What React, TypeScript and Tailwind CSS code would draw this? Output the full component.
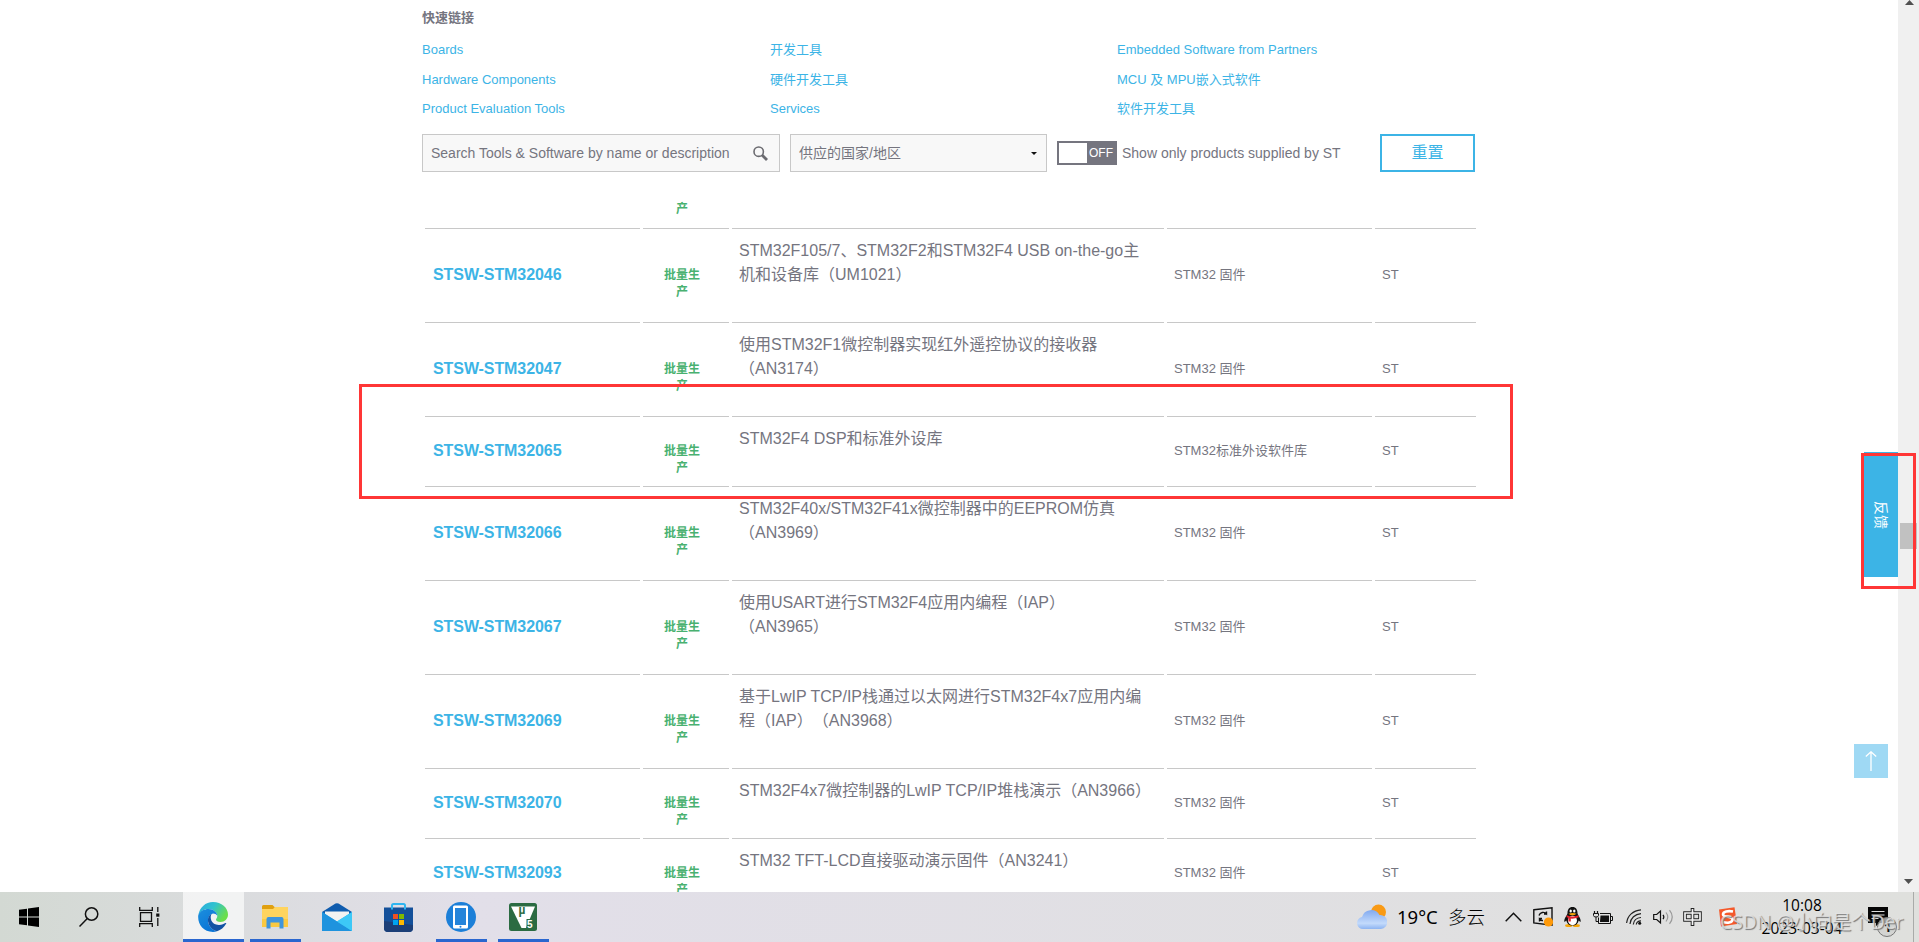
import type { ReactNode } from 'react';

type Product = {
  name: string;
  lines: string[];
  type: string;
};

const quickLinks = [
  ['Boards', '开发工具', 'Embedded Software from Partners'],
  ['Hardware Components', '硬件开发工具', 'MCU 及 MPU嵌入式软件'],
  ['Product Evaluation Tools', 'Services', '软件开发工具'],
];

const products: Product[] = [
  {
    name: 'STSW-STM32046',
    lines: ['STM32F105/7、STM32F2和STM32F4 USB on-the-go主', '机和设备库（UM1021）'],
    type: 'STM32 固件',
  },
  {
    name: 'STSW-STM32047',
    lines: ['使用STM32F1微控制器实现红外遥控协议的接收器', '（AN3174）'],
    type: 'STM32 固件',
  },
  { name: 'STSW-STM32065', lines: ['STM32F4 DSP和标准外设库'], type: 'STM32标准外设软件库' },
  {
    name: 'STSW-STM32066',
    lines: ['STM32F40x/STM32F41x微控制器中的EEPROM仿真', '（AN3969）'],
    type: 'STM32 固件',
  },
  {
    name: 'STSW-STM32067',
    lines: ['使用USART进行STM32F4应用内编程（IAP）', '（AN3965）'],
    type: 'STM32 固件',
  },
  {
    name: 'STSW-STM32069',
    lines: ['基于LwIP TCP/IP栈通过以太网进行STM32F4x7应用内编', '程（IAP）（AN3968）'],
    type: 'STM32 固件',
  },
  {
    name: 'STSW-STM32070',
    lines: ['STM32F4x7微控制器的LwIP TCP/IP堆栈演示（AN3966）'],
    type: 'STM32 固件',
  },
  {
    name: 'STSW-STM32093',
    lines: ['STM32 TFT-LCD直接驱动演示固件（AN3241）'],
    type: 'STM32 固件',
  },
];

const rowGrid = 'grid grid-cols-[215px_86px_432px_205px_101px] gap-x-[3px]';
const cell = 'border-b border-[#c8c8c8]';

function ProductRow({ product }: { product: Product }) {
  return (
    <div className={`${rowGrid} shrink-0 text-[13px]`}>
      <div className={`${cell} flex items-center pb-px pl-2`}>
        <a className="text-base font-bold tracking-[-0.08px] text-[#3cb4e6]">{product.name}</a>
      </div>
      <div className={`${cell} flex items-center pl-[21px]`}>
        {/* the second line hangs below the centre of the row */}
        <div className="h-[17px] w-9 text-center text-xs leading-[17px] font-bold text-[#49b170]">
          批量生产
        </div>
      </div>
      <div className={`${cell} pt-2.5 pb-[35px] pl-[7px] text-base leading-6 whitespace-nowrap`}>
        {product.lines.map((line) => (
          <p key={line}>{line}</p>
        ))}
      </div>
      <div className={`${cell} flex items-center pb-px pl-[7px]`}>{product.type}</div>
      <div className={`${cell} flex items-center pb-px pl-[7px]`}>ST</div>
    </div>
  );
}

function Filters() {
  return (
    <div className="flex h-[38px] w-[1053px] shrink-0 items-center text-sm">
      <div className="flex h-full w-[358px] items-center justify-between border border-[#c8c8c8] bg-[#f8f8f8] pr-[11px] pl-2">
        <span>Search Tools &amp; Software by name or description</span>
        <svg width="15" height="15" viewBox="0 0 15 15" fill="none" stroke="#6b6b70">
          <circle cx="5.7" cy="5.7" r="4.7" strokeWidth="1.6" />
          <path d="M9 9l5 5" strokeWidth="2.8" />
        </svg>
      </div>
      <div className="ml-2.5 flex h-full w-[257px] items-center justify-between border border-[#c8c8c8] bg-[#f8f8f8] pr-[9px] pl-2">
        <span>供应的国家/地区</span>
        <svg width="6" height="3" viewBox="0 0 6 3">
          <path d="M0 0h6L3 3z" fill="#111" />
        </svg>
      </div>
      <div className="ml-2.5 flex h-6 w-[60px] items-center bg-[#75757f] p-0.5 text-xs text-white">
        <span className="h-5 w-7 bg-white" />
        <span className="ml-0.5">OFF</span>
      </div>
      <span className="ml-[5px]">Show only products supplied by ST</span>
      <button className="ml-auto h-full w-[95px] border-2 border-[#3cb4e6] bg-white text-base text-[#3cb4e6]">
        重置
      </button>
    </div>
  );
}

function Scrollbar() {
  return (
    <div className="flex w-[21px] flex-col items-center bg-[#f0f0f0]">
      <svg width="9" height="5" viewBox="0 0 9 5" className="ml-0.5">
        <path d="M4.5 0L9 5H0z" fill="#505050" />
      </svg>
      <div className="mt-[518px] h-[26px] w-[17px] bg-[#c1c1c1]" />
      <svg width="9" height="5" viewBox="0 0 9 5" className="mt-auto mb-2">
        <path d="M0 0h9L4.5 5z" fill="#505050" />
      </svg>
    </div>
  );
}

function TaskButton({ children, width, active, open }: { children: ReactNode; width: string; active?: boolean; open?: boolean }) {
  return (
    <div
      className={`flex h-full shrink-0 items-center justify-center border-b-[3px] pt-[3px] ${width} ${active ? 'bg-white/65' : ''} ${
        active || open ? 'border-[#2a66cf]' : 'border-transparent'
      }`}
    >
      {children}
    </div>
  );
}

function WindowsIcon() {
  return (
    <svg width="20" height="20" viewBox="0 0 20 20">
      <path d="M0 2.8l8-1.1v7.8H0zM9 1.5L20 0v9.5H9zM0 10.5h8v7.8l-8-1.1zM9 10.5h11V20L9 18.5z" />
    </svg>
  );
}

function SearchIcon() {
  return (
    <svg width="20" height="20" viewBox="0 0 20 20" fill="none" stroke="#111" strokeWidth="1.5">
      <circle cx="12.6" cy="7" r="6.2" />
      <path d="M8.3 11.5L.5 19.5" />
    </svg>
  );
}

function TaskViewIcon() {
  return (
    <svg width="21" height="20" viewBox="0 0 21 20" fill="none" stroke="#111" strokeWidth="1.3">
      <path d="M.7 0v3.3h12.6V0M.7 20v-3.3h12.6V20M1.5 5.7h11v8.6h-11zM18.8 0v5M18.8 11v8" />
      <path d="M17.2 6.5h3.2v3.2h-3.2z" fill="#111" stroke="none" />
    </svg>
  );
}

function EdgeIcon() {
  return (
    <svg width="30" height="30" viewBox="0 0 30 30">
      <defs>
        <linearGradient id="edge-top" x1="0" y1="0" x2="1" y2="0.5">
          <stop offset="0" stopColor="#2aa9e0" />
          <stop offset="0.5" stopColor="#31c2cf" />
          <stop offset="1" stopColor="#6ade4b" />
        </linearGradient>
        <linearGradient id="edge-left" x1="0" y1="0" x2="0.6" y2="1">
          <stop offset="0" stopColor="#1c8fdd" />
          <stop offset="1" stopColor="#0a74d6" />
        </linearGradient>
      </defs>
      <path d="M.5 12.5C1.7 5.5 7.5 0 15 0c8.500 0 15 5.600 15 12.600 0 4.600-3.400 7.400-7.400 7.400-3 0-4.600-1-4.600-2.200 0-1 1.300-1.400 1.300-4C19.300 10.500 15.500 7 10.500 7 6.300 7 2.500 9 .5 12.500z" fill="url(#edge-top)" />
      <path d="M.3 13C2 9 6 7 10.500 7c5 0 8.800 3.500 8.800 6.800-1-1.500-2.600-2.300-4.300-2.300-4 1-5.500 4.500-4.800 8.500.7 4.500 4 8 8.800 9.300-1.300.5-2.600.7-4 .7C5 30-.8 21.800.3 13z" fill="url(#edge-left)" />
      <path d="M10.200 20c-.8-4 .8-7 3.300-8.100-2 3.200-.5 10.800 7.300 11 3 .1 5.200-1 6.700-1.800.6-.3 1 .1.600.7-2.100 3.600-5.200 6.400-9.100 7.500-4.800-1.300-8.100-4.800-8.800-9.300z" fill="#1253a4" />
    </svg>
  );
}

function ExplorerIcon() {
  return (
    <svg width="28" height="24" viewBox="0 0 28 24">
      <path d="M1 1.500Q1 0 2.500 0h9L14 2.500 12 5H1z" fill="#e0a010" />
      <path d="M1 4h11l2-2h13v20H1z" fill="#ffd45e" />
      <path d="M1 14h26v8H1z" fill="#fbc941" />
      <path d="M5.500 23.500V14q0-2 2-2h13q2 0 2 2v9.500h-4V17.500h-9v6z" fill="#3f95dc" />
    </svg>
  );
}

function MailIcon() {
  return (
    <svg width="30" height="28" viewBox="0 0 30 28">
      <path d="M0 9L13.500.6q1.500-.9 3 0L30 9v3H0z" fill="#0f5cae" />
      <path d="M3 8.500h24V18H3z" fill="#f2f2f2" />
      <path d="M0 9l15 9.500L30 9v19H0z" fill="#2eb3ee" />
      <path d="M0 9l30 19H0z" fill="#1e93de" />
      <path d="M15 18.500L30 9v19z" fill="#3dc8f7" />
    </svg>
  );
}

function StoreIcon() {
  return (
    <svg width="29" height="29" viewBox="0 0 29 29">
      <path d="M0 4.500h29V25q0 4-4 4H4q-4 0-4-4z" fill="#14509a" />
      <path d="M0 18l29 4v3q0 4-4 4H4q-4 0-4-4z" fill="#1c3f78" />
      <path d="M8 6.500V2.500Q8 1 9.500 1h10Q21 1 21 2.500v4" fill="none" stroke="#2fb5f0" strokeWidth="2" />
      <path d="M9 11h5v5H9z" fill="#f25022" />
      <path d="M15 11h5v5h-5z" fill="#7fba00" />
      <path d="M9 17h5v5H9z" fill="#00a4ef" />
      <path d="M15 17h5v5h-5z" fill="#ffb900" />
    </svg>
  );
}

function PhoneIcon() {
  return (
    <svg width="30" height="30" viewBox="0 0 30 30">
      <circle cx="15" cy="15" r="15" fill="#1c7fd8" />
      <rect x="7" y="3.500" width="15" height="23" rx="1.500" fill="#fff" />
      <path d="M9 6h11v17H9z" fill="#2484da" />
      <circle cx="14.500" cy="24.700" r="1" fill="#1c7fd8" />
    </svg>
  );
}

function KeilIcon() {
  return (
    <svg width="28" height="28" viewBox="0 0 28 28">
      <rect width="28" height="28" rx="2.500" fill="#2b6b42" />
      <path d="M2 3.500h24L17 25h-4.500z" fill="#fff" />
      <text x="9.500" y="11" fontSize="12" fontWeight="700" fill="#2b6b42" fontFamily="Liberation Sans, sans-serif">µ</text>
      <path d="M17.500 16h9v10h-9z" fill="#2b6b42" />
      <text x="18" y="25" fontSize="10" fontWeight="700" fill="#fff" fontFamily="Liberation Sans, sans-serif">5</text>
    </svg>
  );
}

function WeatherIcon() {
  return (
    <svg width="30" height="26" viewBox="0 0 30 26">
      <defs>
        <linearGradient id="cloud" x1="0" y1="0" x2="0" y2="1">
          <stop offset="0" stopColor="#82aaf0" />
          <stop offset="0.7" stopColor="#c3dafb" />
          <stop offset="1" stopColor="#8db4f2" />
        </linearGradient>
      </defs>
      <circle cx="21.500" cy="8" r="7.500" fill="#f99a15" />
      <path d="M6 25a6 6 0 0 1-1-11.900A9.500 9.500 0 0 1 22.500 11a7 7 0 0 1 1.500 14z" fill="url(#cloud)" />
    </svg>
  );
}

function UpdateIcon() {
  return (
    <svg width="21" height="20" viewBox="0 0 21 20" fill="none" stroke="#111" strokeWidth="1.400">
      <path d="M.8 2.800L19 .8v17.500L.8 16z" />
      <path d="M6 8.500a4.500 4.500 0 0 1 7.500-1.700V4.500M13.500 7h-2.500M10 13.500a4 4 0 0 1-3.500-1.300v2.300M6.500 11.500H9" />
      <circle cx="15.500" cy="15" r="4.600" fill="#ff9a0a" stroke="none" />
    </svg>
  );
}

function PenguinIcon() {
  return (
    <svg width="17" height="20" viewBox="0 0 17 20">
      <ellipse cx="4.700" cy="18.400" rx="3.600" ry="1.500" fill="#f6a60a" />
      <ellipse cx="12.300" cy="18.400" rx="3.600" ry="1.500" fill="#f6a60a" />
      <path d="M8.500 0C12 0 13.500 2.700 13.500 6c0 2 3.500 5 3.200 8.500-.1 1-1.500-.5-2-1C14 16.500 12 18.500 8.500 18.500S3 16.500 2.300 13.500c-.5.500-1.900 2-2 1C0 11 3.500 8 3.500 6 3.500 2.700 5 0 8.500 0z" fill="#111" />
      <ellipse cx="8.500" cy="13.500" rx="4.500" ry="4.700" fill="#fff" />
      <ellipse cx="6.700" cy="4" rx="1.200" ry="1.600" fill="#fff" />
      <ellipse cx="10.300" cy="4" rx="1.200" ry="1.600" fill="#fff" />
      <path d="M4.500 6.800q4-1.500 8 0-4 3-8 0z" fill="#f6a60a" />
      <path d="M2.800 8.200q5.700 2.500 11.500 0l.5 2q-4 1.700-8 1.400v3H4.500v-3.500l-2-1z" fill="#e5222c" />
    </svg>
  );
}

function BatteryIcon() {
  return (
    <svg width="20" height="13" viewBox="0 0 20 13" fill="none" stroke="#111">
      <path d="M1.500 0v2.500M4.500 0v2.500" strokeWidth="1.200" />
      <path d="M.5 2.500h5v2q0 1.500-2.500 1.500T.5 4.500z" />
      <path d="M3 6v4.500h2M7 2.500h10.500v10H5.500v-6" />
      <path d="M7.500 4.500H16v6.500H7z" fill="#111" stroke="none" />
      <path d="M18 5.500h1.500v4H18" />
    </svg>
  );
}

function WifiIcon() {
  return (
    <svg width="16" height="16" viewBox="0 0 16 16" fill="none" stroke="#222" strokeWidth="1.200">
      <path d="M.6 14C1.500 6.500 7 1.500 15 .8M4 15C4.500 9 9 5 15 4.600M7.300 15.500c.4-4 3.500-6.700 7.700-7M10.300 15.500c.2-2.200 2-3.600 4.700-3.700" />
      <circle cx="13.700" cy="14.300" r="1.500" fill="#111" stroke="none" />
    </svg>
  );
}

function SpeakerIcon() {
  return (
    <svg width="21" height="16" viewBox="0 0 21 16" fill="none" stroke="#111" strokeWidth="1.200">
      <path d="M.7 5.500h3L7.500 2v12L3.700 10.500h-3z" />
      <path d="M10 5.800q1.700 2.200 0 4.400" />
      <path d="M13 3.500q3.500 4.500 0 9M16.500 1.200q5.500 6.800 0 13.600" stroke="#999" />
    </svg>
  );
}

function ImeIcon() {
  return (
    <svg width="19" height="20" viewBox="0 0 19 20" fill="none">
      <path d="M9.500 1v18M2 6h15v7H2z" stroke="#222" strokeWidth="3.600" />
      <path d="M9.500 2v16M2 6h15v7H2z" stroke="#f4f4f4" strokeWidth="1.700" />
    </svg>
  );
}

function SogouIcon() {
  return (
    <svg width="20" height="20" viewBox="0 0 20 20">
      <path d="M1 2.500L16.500.3 19 17 3 19.500z" fill="#f4592b" />
      <path d="M15 4.500C10 3.500 5 4.500 5 7.500s9.500 1.500 9.500 5-5.500 3.700-9.500 2.500" fill="none" stroke="#fff" strokeWidth="2.600" />
    </svg>
  );
}

function NotificationIcon() {
  return (
    <svg width="30" height="32" viewBox="0 0 30 32">
      <path d="M0 0h20v16h-8l-4 3v-3H0z" fill="#050505" />
      <path d="M3.500 4.500h13M3.500 8h13M3.500 11.500h7" stroke="#ddd" />
      <circle cx="19" cy="20" r="9.500" fill="#cfd0ce" fillOpacity=".75" stroke="#777" />
      <text x="16" y="25" fontSize="13" fontWeight="700" fill="#111" fontFamily="Open Sans, sans-serif">1</text>
    </svg>
  );
}

function Taskbar() {
  return (
    <footer className="relative flex h-[50px] shrink-0 bg-linear-to-r from-[#d3d9d3] via-[#e2dfe9] via-25% to-[#dfe0dd] font-['Open_Sans','Noto_Sans_CJK_SC',sans-serif] text-black">
      <TaskButton width="w-[58px]"><WindowsIcon /></TaskButton>
      <TaskButton width="w-[62px]"><SearchIcon /></TaskButton>
      <TaskButton width="w-[58px]"><TaskViewIcon /></TaskButton>
      <div className="ml-[5px] flex">
        <TaskButton width="w-[61px] pr-0.5" active><EdgeIcon /></TaskButton>
        <div className="ml-1.5 flex gap-[11px]">
          <TaskButton width="w-[51px] pr-0.5" open><ExplorerIcon /></TaskButton>
          <TaskButton width="w-[51px] pr-0.5"><MailIcon /></TaskButton>
          <TaskButton width="w-[51px] pr-0.5"><StoreIcon /></TaskButton>
          <TaskButton width="w-[51px] pr-0.5" open><PhoneIcon /></TaskButton>
          <TaskButton width="w-[51px] pr-0.5" open><KeilIcon /></TaskButton>
        </div>
      </div>
      <div className="ml-auto flex items-center">
        <WeatherIcon />
        <span className="ml-2.5 flex w-[88px] items-center justify-between text-[18.5px] whitespace-nowrap">
          <span className="font-['Noto_Sans',sans-serif]">19°C</span>
          <span className="font-light">多云</span>
        </span>
        <svg className="ml-5" width="17" height="10" viewBox="0 0 17 10" fill="none" stroke="#111" strokeWidth="1.500">
          <path d="M.7 9.200L8.500 1.200l7.800 8" />
        </svg>
        <div className="ml-[11px] flex items-center">
          <UpdateIcon />
          <div className="ml-[10px]"><PenguinIcon /></div>
          <div className="ml-3"><BatteryIcon /></div>
          <div className="ml-[13px]"><WifiIcon /></div>
          <div className="ml-[11px]"><SpeakerIcon /></div>
          <div className="ml-[9px]"><ImeIcon /></div>
          <div className="ml-4"><SogouIcon /></div>
        </div>
        <div className="ml-[21px] w-[86px] text-center text-[15.5px] leading-[23px] whitespace-nowrap">
          <p>10:08</p>
          <p>2023-03-04</p>
        </div>
        <div className="ml-[23px] pt-3"><NotificationIcon /></div>
        <div className="ml-[15px] h-[50px] w-[6px] border-l border-[#a9aba9]" />
      </div>
      <span className="absolute top-[17px] left-[1720px] text-[19.3px] leading-[26px] whitespace-nowrap text-[#e8e8e8]/75 [text-shadow:1px_1px_1px_#777]">
        CSDN @小向是个Der
      </span>
    </footer>
  );
}

export default function App() {
  return (
    <div className="relative flex h-[942px] w-[1919px] flex-col overflow-hidden bg-white font-['Liberation_Sans','Noto_Sans_CJK_SC',sans-serif] text-[#75757f] [text-spacing-trim:space-all]">
      <div className="flex h-[892px] shrink-0 justify-between overflow-hidden">
        <main className="ml-[422px] flex w-[1054px] flex-col">
          <h2 className="mt-2 text-[13px] leading-5 font-bold">快速链接</h2>
          <div className="mt-[7px] mb-[11px] grid shrink-0 grid-cols-[348px_347px_1fr] grid-rows-[30px_29px_29px] items-center text-[13px] text-[#3cb4e6]">
            {quickLinks.flat().map((link) => (
              <a key={link}>{link}</a>
            ))}
          </div>
          <Filters />
          <div className="mt-[29px] ml-[3px] flex shrink-0 flex-col">
            <div className={`${rowGrid} h-7 shrink-0`}>
              <div className={cell} />
              <div className={`${cell} pl-[21px]`}>
                <div className="w-9 text-center text-xs leading-[17px] font-bold text-[#49b170]">产</div>
              </div>
              <div className={cell} />
              <div className={cell} />
              <div className={cell} />
            </div>
            {products.map((product) => (
              <ProductRow key={product.name} product={product} />
            ))}
          </div>
        </main>
        <Scrollbar />
      </div>
      <Taskbar />

      {/* floating page controls */}
      <button className="absolute top-[452px] left-[1864px] flex h-[125px] w-[34px] items-center justify-center bg-[#3cb4e6] text-sm text-white">
        <span className="rotate-90 whitespace-nowrap">反馈</span>
      </button>
      <button className="absolute top-[744px] left-[1854px] flex size-[34px] items-center justify-center bg-[#9fd9f4]">
        <svg width="12" height="20" viewBox="0 0 12 20" fill="none" stroke="#fff" strokeWidth="1.300">
          <path d="M6 20V1M.8 5.500L6 .8l5.200 4.700" />
        </svg>
      </button>

      {/* highlight frames */}
      <div className="absolute top-[384px] left-[359px] h-[115px] w-[1154px] border-3 border-[#ff3636]" />
      <div className="absolute top-[453px] left-[1861px] h-[136px] w-[55px] border-3 border-[#ff3636]" />
    </div>
  );
}
